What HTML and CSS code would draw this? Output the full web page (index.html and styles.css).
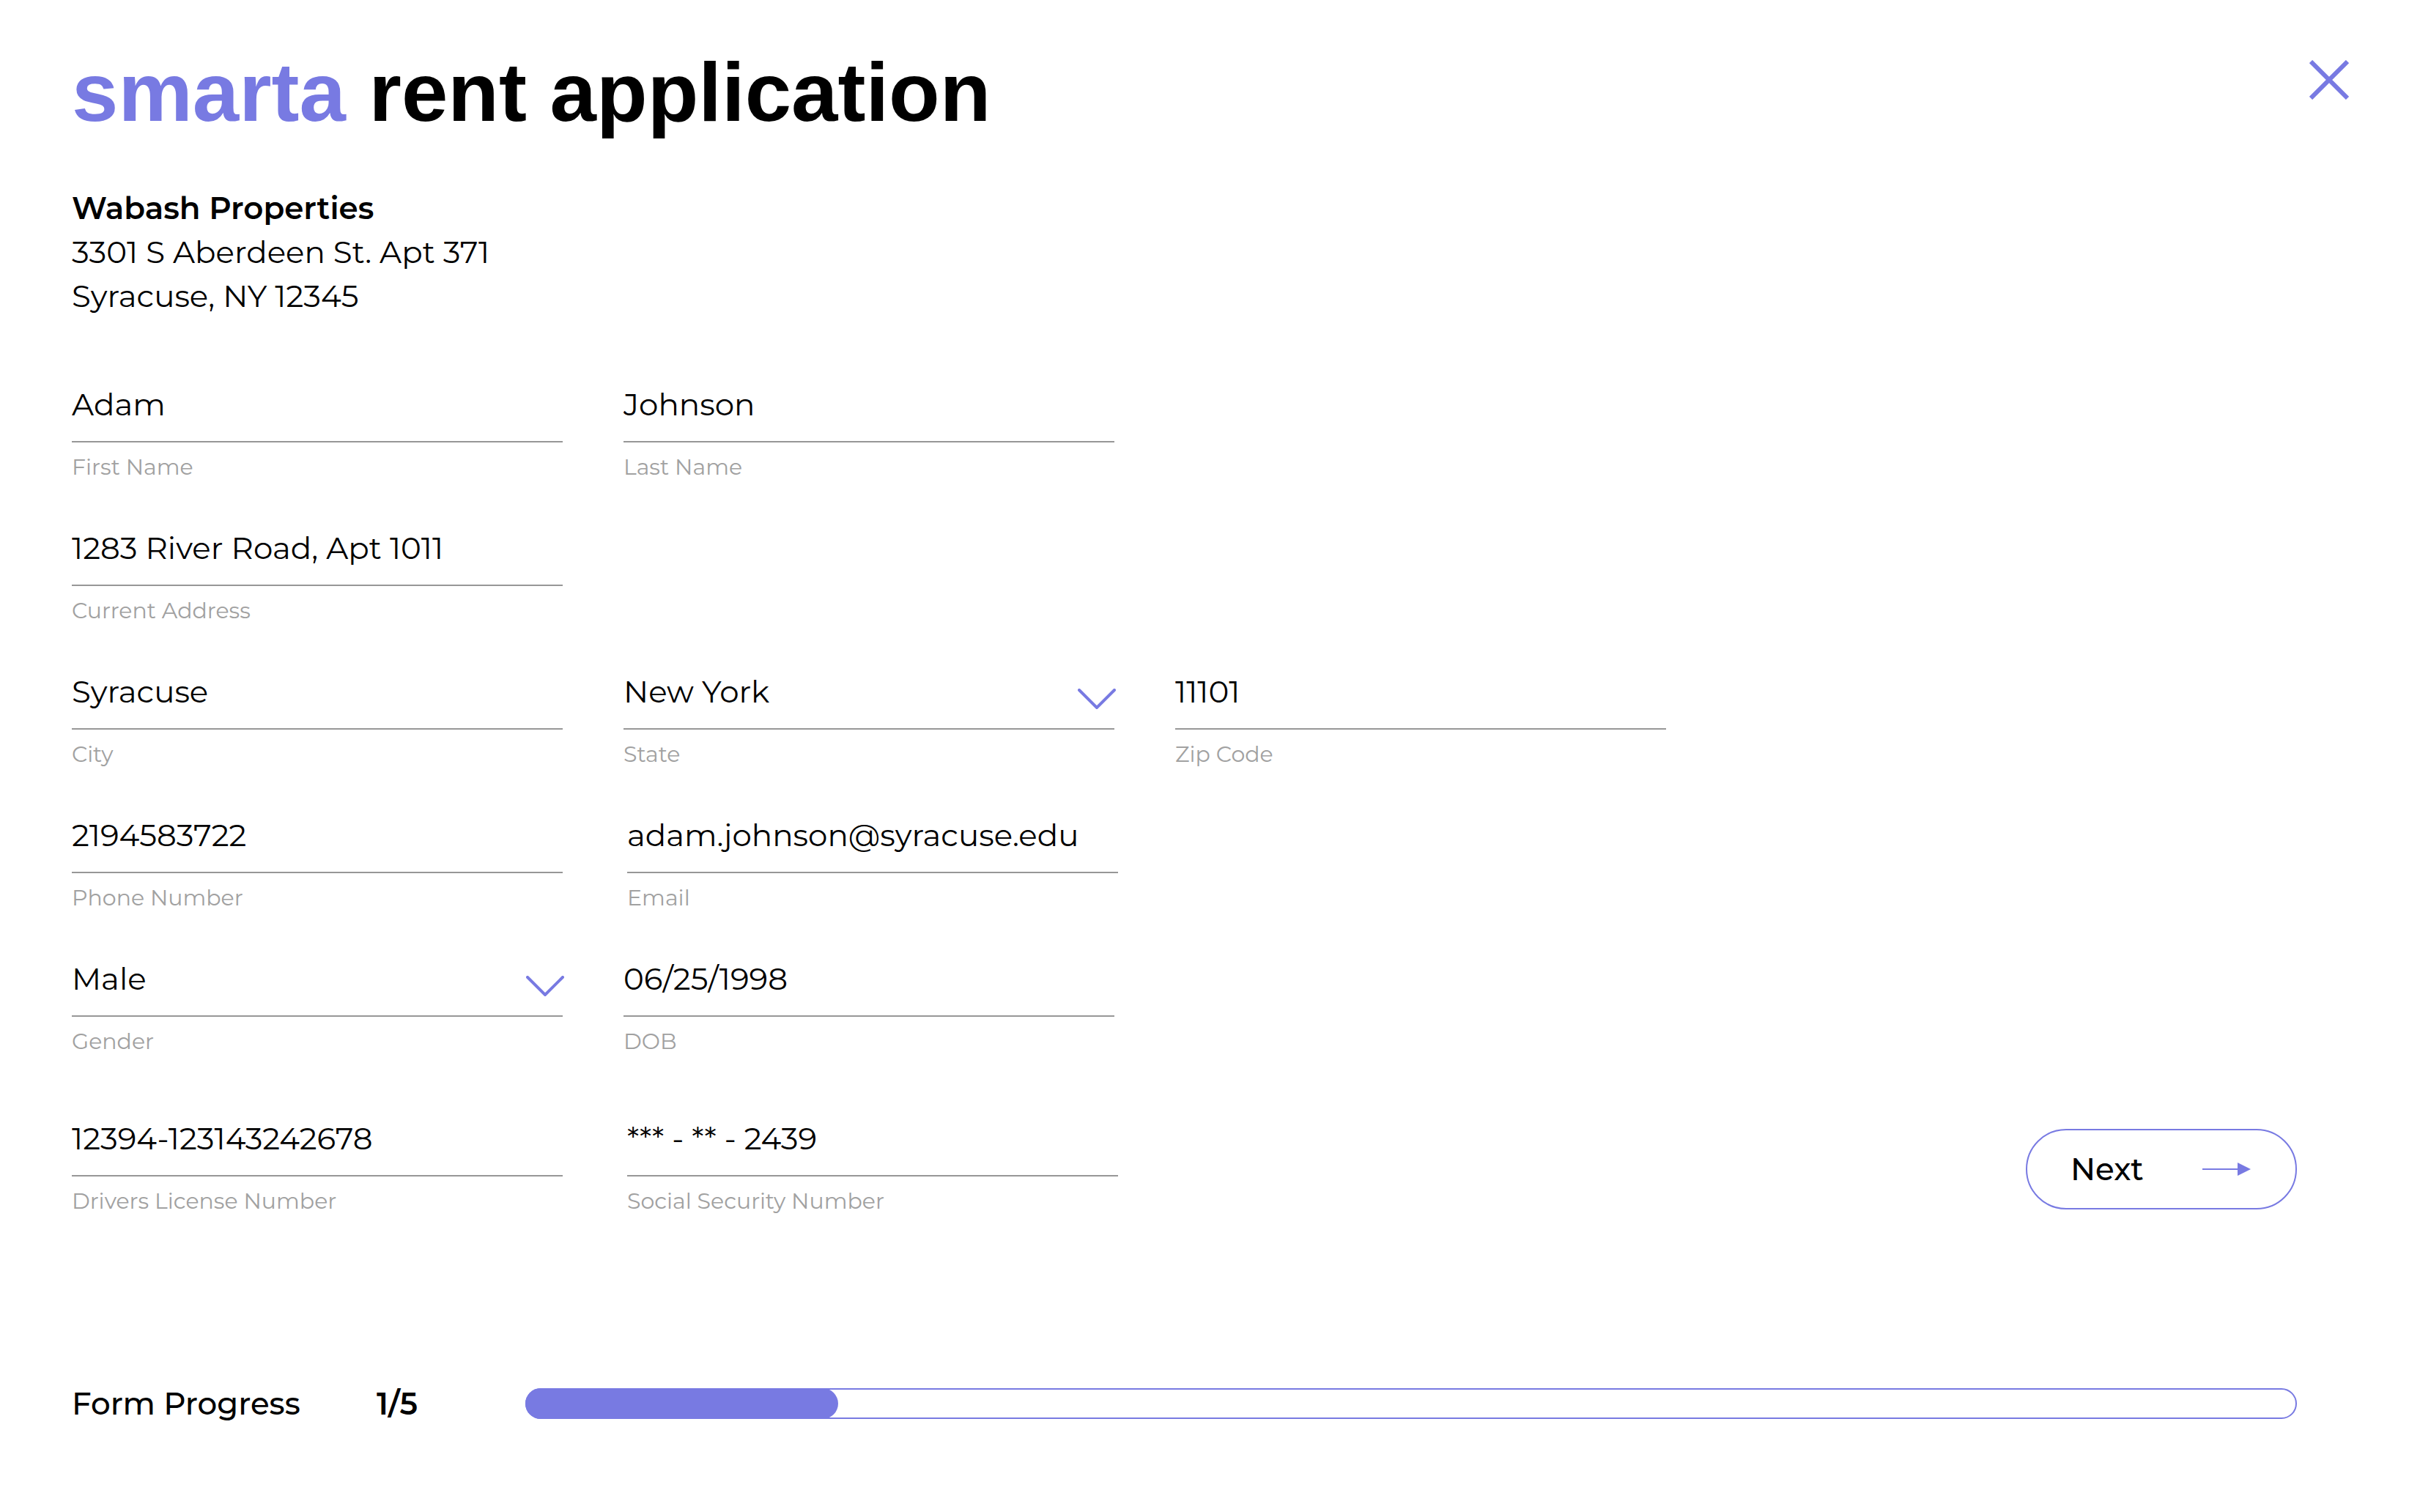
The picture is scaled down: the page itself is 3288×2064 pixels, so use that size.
FILE: index.html
```html
<!DOCTYPE html>
<html lang="en">
<head>
  <meta charset="utf-8">
  <meta name="viewport" content="width=device-width, initial-scale=1">
  <title>smarta rent application</title>
  <link rel="stylesheet" href="styles.css">
</head>
<body>
  <main class="page">
    <header class="header">
      <h1 class="title"><span class="brand">smarta</span> rent application</h1>
      <button class="close" type="button" aria-label="Close">
        <svg class="close-icon" viewBox="0 0 54 54" aria-hidden="true"><path d="M2 2 52 52M52 2 2 52"/></svg>
      </button>
    </header>

    <address class="property">
      <strong class="property-name">Wabash Properties</strong><br>
      3301 S Aberdeen St. Apt 371<br>
      Syracuse, NY 12345
    </address>

    <form class="form">
      <div class="row">
        <div class="field">
          <input class="control" id="first" type="text" value="Adam">
          <label class="label" for="first">First Name</label>
        </div>
        <div class="field">
          <input class="control" id="last" type="text" value="Johnson">
          <label class="label" for="last">Last Name</label>
        </div>
      </div>

      <div class="row">
        <div class="field">
          <input class="control" id="address" type="text" value="1283 River Road, Apt 1011">
          <label class="label" for="address">Current Address</label>
        </div>
      </div>

      <div class="row">
        <div class="field">
          <input class="control" id="city" type="text" value="Syracuse">
          <label class="label" for="city">City</label>
        </div>
        <div class="field">
          <select class="control" id="state"><option>New York</option></select>
          <svg class="chevron" viewBox="0 0 52 28" aria-hidden="true"><path d="M2 2 26 26 50 2"/></svg>
          <label class="label" for="state">State</label>
        </div>
        <div class="field">
          <input class="control" id="zip" type="text" value="11101">
          <label class="label" for="zip">Zip Code</label>
        </div>
      </div>

      <div class="row row-wide">
        <div class="field">
          <input class="control" id="phone" type="tel" value="2194583722">
          <label class="label" for="phone">Phone Number</label>
        </div>
        <div class="field">
          <input class="control" id="email" type="email" value="adam.johnson@syracuse.edu">
          <label class="label" for="email">Email</label>
        </div>
      </div>

      <div class="row">
        <div class="field">
          <select class="control" id="gender"><option>Male</option></select>
          <svg class="chevron" viewBox="0 0 52 28" aria-hidden="true"><path d="M2 2 26 26 50 2"/></svg>
          <label class="label" for="gender">Gender</label>
        </div>
        <div class="field">
          <input class="control" id="dob" type="text" value="06/25/1998">
          <label class="label" for="dob">DOB</label>
        </div>
      </div>

      <div class="row row-wide row-last">
        <div class="field">
          <input class="control" id="license" type="text" value="12394-123143242678">
          <label class="label" for="license">Drivers License Number</label>
        </div>
        <div class="field">
          <input class="control" id="ssn" type="text" value="*** - ** - 2439">
          <label class="label" for="ssn">Social Security Number</label>
        </div>
        <button class="next" type="submit">
          Next
          <svg class="arrow" viewBox="0 0 66 18" aria-hidden="true"><path d="M0 8H48V0L66 9 48 18V10H0Z"/></svg>
        </button>
      </div>
    </form>

    <footer class="progress">
      <span class="progress-label" id="progress-label">Form Progress</span>
      <strong class="progress-count">1/5</strong>
      <div class="track" role="progressbar" aria-labelledby="progress-label" aria-valuemin="0" aria-valuemax="5" aria-valuenow="1">
        <div class="fill"></div>
      </div>
    </footer>
  </main>
</body>
</html>
```
FILE: styles.css
```css
:root {
  --accent: #787ae2;
  --line: #979797;
  --muted: #a1a1a1;
}

* {
  box-sizing: border-box;
}

body {
  margin: 0;
  background: #fff;
  color: #000;
  font-family: Montserrat, Inter, sans-serif;
  font-size: 42px;
  line-height: 60px;
}

.page {
  padding: 60px 153px 96px 98px;
}

.header {
  display: flex;
  justify-content: space-between;
  align-items: flex-start;
  margin-right: -71px;
}

.title {
  margin: 0;
  font-family: "Liberation Sans", Arial, sans-serif;
  font-size: 114px;
  font-weight: 700;
  line-height: 132px;
}

.brand {
  color: var(--accent);
}

.close {
  margin: 22px 0 0;
  padding: 0;
  border: 0;
  background: none;
}

.close-icon {
  display: block;
  width: 54px;
  height: 54px;
  fill: none;
  stroke: var(--accent);
  stroke-width: 6;
}

.property {
  margin: 62px 0 88px;
  font-style: normal;
}

.property-name {
  font-weight: 600;
}

.form {
  display: flex;
  flex-direction: column;
  gap: 60px;
}

.row {
  display: flex;
  gap: 83px;
}

.row-wide {
  gap: 88px;
}

.row-last {
  margin-top: 22px;
}

.field {
  position: relative;
  flex: 0 1 670px;
  min-width: 0;
}

.control {
  display: block;
  width: 100%;
  height: 82px;
  margin: 0;
  padding: 0 0 20px;
  border: 0;
  border-bottom: 2px solid var(--line);
  border-radius: 0;
  outline: 0;
  appearance: none;
  background: none;
  color: inherit;
  font: inherit;
}

.chevron {
  position: absolute;
  top: 26px;
  right: -2px;
  width: 52px;
  height: 28px;
  fill: none;
  stroke: var(--accent);
  stroke-width: 4;
  stroke-linecap: round;
  pointer-events: none;
}

.label {
  display: block;
  margin-top: 14px;
  color: var(--muted);
  font-size: 30px;
  line-height: 40px;
}

.next {
  display: flex;
  align-items: center;
  justify-content: space-between;
  width: 370px;
  height: 110px;
  margin: 17px 0 0 auto;
  padding: 0 61px 0 59px;
  border: 2px solid var(--accent);
  border-radius: 55px;
  background: none;
  color: inherit;
  font: inherit;
  font-weight: 500;
}

.arrow {
  width: 66px;
  height: 18px;
  fill: var(--accent);
}

.progress {
  display: grid;
  grid-template-columns: 416px 203px 1fr;
  align-items: center;
  margin-top: 226px;
}

.progress-label {
  font-weight: 500;
}

.progress-count {
  font-weight: 600;
}

.track {
  height: 42px;
  border: 2px solid var(--accent);
  border-radius: 21px;
}

.fill {
  width: 17.7%;
  height: 42px;
  margin: -2px;
  border-radius: 21px;
  background: var(--accent);
}
```
